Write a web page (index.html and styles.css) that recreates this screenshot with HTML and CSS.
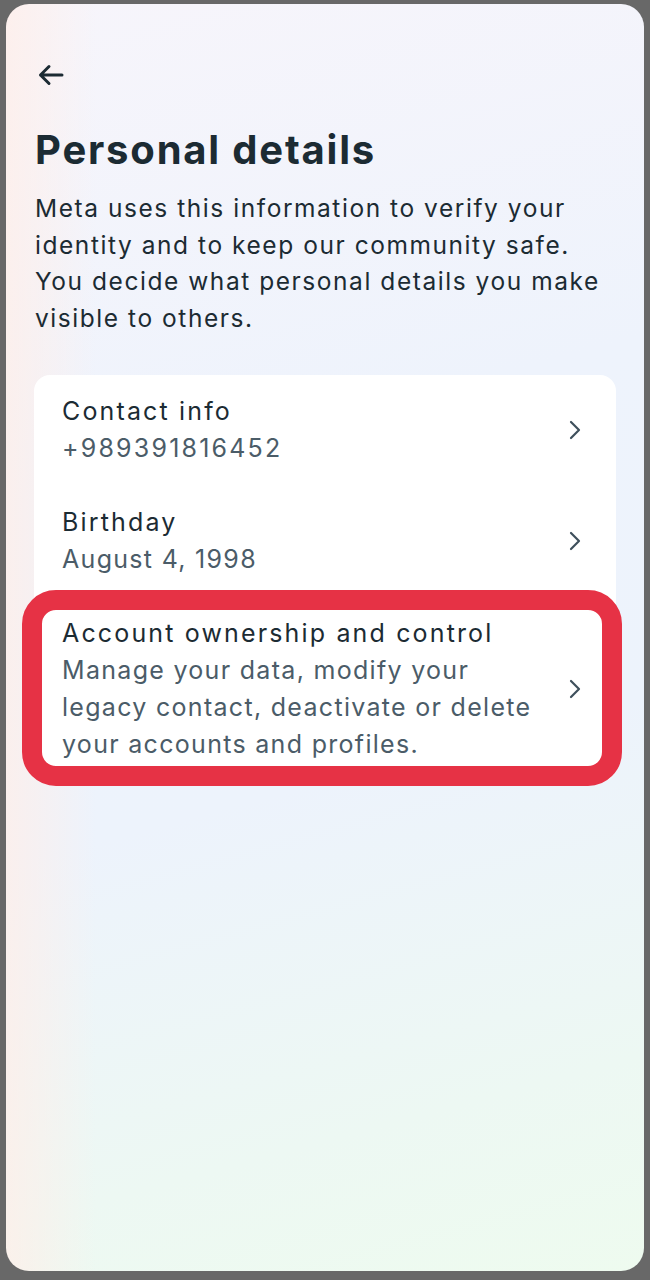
FILE: index.html
```html
<!DOCTYPE html>
<html lang="en">
<head>
<meta charset="utf-8">
<title>Personal details</title>
<link rel="stylesheet" href="styles.css">
</head>
<body>
<div class="screen">
  <header class="topbar">
    <button class="back" aria-label="Back">
      <svg width="28" height="28" viewBox="0 0 28 28" fill="none" stroke="#1c2b33" stroke-width="3" stroke-linecap="round" stroke-linejoin="round"><path d="M25 14H3.5M12 5.5L3.5 14L12 22.5"/></svg>
    </button>
  </header>
  <h1 class="title">Personal details</h1>
  <p class="intro">Meta uses this information to verify your identity and to keep our community safe. You decide what personal details you make visible to others.</p>

  <div class="card">
    <a class="row">
      <div class="row-text">
        <div class="row-title">Contact info</div>
        <div class="row-sub row-num">+989391816452</div>
      </div>
      <svg class="chev" width="14" height="20" viewBox="0 0 14 20" fill="none" stroke="#3e4f5b" stroke-width="2.2" stroke-linecap="round" stroke-linejoin="round"><path d="M3 2l8 8-8 8"/></svg>
    </a>
    <a class="row">
      <div class="row-text">
        <div class="row-title">Birthday</div>
        <div class="row-sub">August 4, 1998</div>
      </div>
      <svg class="chev" width="14" height="20" viewBox="0 0 14 20" fill="none" stroke="#3e4f5b" stroke-width="2.2" stroke-linecap="round" stroke-linejoin="round"><path d="M3 2l8 8-8 8"/></svg>
    </a>
    <a class="row row-highlight">
      <div class="row-text">
        <div class="row-title">Account ownership and control</div>
        <div class="row-sub">Manage your data, modify your legacy contact, deactivate or delete your accounts and profiles.</div>
      </div>
      <svg class="chev" width="14" height="20" viewBox="0 0 14 20" fill="none" stroke="#3e4f5b" stroke-width="2.2" stroke-linecap="round" stroke-linejoin="round"><path d="M3 2l8 8-8 8"/></svg>
      <span class="highlight-ring" aria-hidden="true"></span>
    </a>
  </div>
</div>
</body>
</html>
```
FILE: styles.css
```css
* { box-sizing: border-box; }
html, body { margin: 0; padding: 0; }
body {
  background: #686868;
  width: 650px;
  height: 1280px;
  padding: 4px 6px 0 6px;
  font-family: Inter, "Noto Sans", sans-serif;
  color: #1c2b33;
}
.screen {
  position: relative;
  height: 1267px;
  border-radius: 23px;
  overflow: hidden;
  padding: 53px 20px 0 29px;
  background:
    linear-gradient(90deg, rgba(255, 238, 232, 0.75) 0, rgba(255, 240, 236, 0) 90px),
    linear-gradient(165deg, #f7f5fb 0%, #eef3fc 35%, #edf3fc 60%, #edf8f3 85%, #eefbef 100%);
}
.topbar { height: 36px; display: flex; align-items: center; }
.back {
  border: 0; background: none; padding: 0; margin: 0 0 0 2px;
  width: 28px; height: 28px; display: flex;
}
.title {
  margin: 33px 0 0 0;
  font-size: 40px;
  line-height: 48px;
  font-weight: 700;
  letter-spacing: 1.8px;
}
.intro {
  margin: 16px 0 0 0;
  max-width: 574px;
  font-size: 24.5px;
  line-height: 36.7px;
  letter-spacing: 1.55px;
  color: #1c2b33;
}
.card {
  margin: 38px 0 0 -1px;
  width: 582px;
  background: #fff;
  border-radius: 16px;
}
.row {
  position: relative;
  display: flex;
  align-items: center;
  padding: 18.5px 34px 18.5px 28px;
}
.row-text { flex: 1; min-width: 0; max-width: 487px; }
.row-title {
  font-size: 25px;
  line-height: 37px;
  letter-spacing: 2.15px;
  color: #1c2b33;
}
.row-sub {
  font-size: 25px;
  line-height: 37px;
  letter-spacing: 1.3px;
  color: #4b5c68;
}
.row-num { letter-spacing: 2.2px; }
.chev { margin-left: auto; flex: none; }
.highlight-ring {
  position: absolute;
  left: -12px; right: -6px; top: -7px; bottom: -4px;
  border: 20px solid #e63245;
  border-radius: 34px;
  pointer-events: none;
}
```
